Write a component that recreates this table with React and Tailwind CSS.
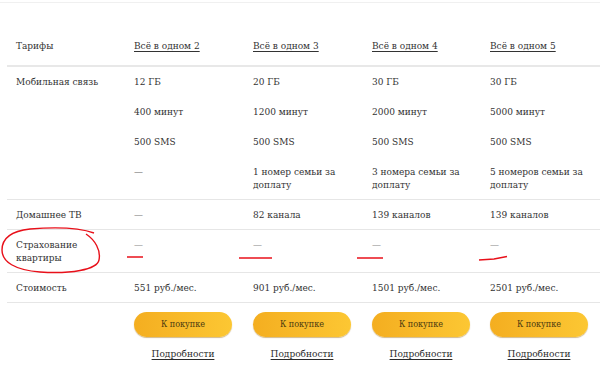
import React from 'react';

const tariffs = [
  {
    name: 'Всё в одном 2',
    mobile: ['12 ГБ', '400 минут', '500 SMS', '—'],
    tv: '—',
    price: '551 руб./мес.',
  },
  {
    name: 'Всё в одном 3',
    mobile: ['20 ГБ', '1200 минут', '500 SMS', '1 номер семьи за доплату'],
    tv: '82 канала',
    price: '901 руб./мес.',
  },
  {
    name: 'Всё в одном 4',
    mobile: ['30 ГБ', '2000 минут', '500 SMS', '3 номера семьи за доплату'],
    tv: '139 каналов',
    price: '1501 руб./мес.',
  },
  {
    name: 'Всё в одном 5',
    mobile: ['30 ГБ', '5000 минут', '500 SMS', '5 номеров семьи за доплату'],
    tv: '139 каналов',
    price: '2501 руб./мес.',
  },
];

const grid = 'grid grid-cols-[118px_119px_119px_118px_119px]';

function App() {
  return (
    <div
      className="relative w-[600px] h-[371px] overflow-hidden bg-white text-[10px] leading-[13px] text-[#333] font-stretch-condensed"
      style={{ fontFamily: '"DejaVu Serif", "Liberation Serif", serif' }}
    >
      <div className="mt-[2px] h-px bg-[#f0f0f0]" />

      <div className="ml-[7px]">
        {/* header */}
        <div className={`${grid} h-[62px] items-end pb-[13px]`}>
          <div className="pl-[9px]">Тарифы</div>
          {tariffs.map((t) => (
            <div key={t.name} className="pl-[9px]">
              <span className="underline underline-offset-2">{t.name}</span>
            </div>
          ))}
        </div>
        <div className="h-[2px] bg-[#e8e8e8]" />

        {/* mobile */}
        <div className={`${grid} pt-[8px] pb-[8px] border-b border-[#e6e6e6]`}>
          <div className="pl-[9px]">Мобильная связь</div>
          {tariffs.map((t) => (
            <div key={t.name} className="pl-[9px] pr-[8px] flex flex-col gap-[17px]">
              {t.mobile.map((m, i) => (
                <div key={i} className={m === '—' ? 'text-[#666]' : ''}>{m}</div>
              ))}
            </div>
          ))}
        </div>

        {/* tv */}
        <div className={`${grid} py-[8px] border-b border-[#e6e6e6]`}>
          <div className="pl-[9px]">Домашнее ТВ</div>
          {tariffs.map((t) => (
            <div key={t.name} className={`pl-[9px] ${t.tv === '—' ? 'text-[#777]' : ''}`}>{t.tv}</div>
          ))}
        </div>

        {/* insurance */}
        <div className={`${grid} py-[8px] border-b border-[#e6e6e6]`}>
          <div className="pl-[9px]">Страхование<br />квартиры</div>
          {tariffs.map((t) => (
            <div key={t.name} className="pl-[9px] text-[#888]">—</div>
          ))}
        </div>

        {/* price */}
        <div className={`${grid} py-[8px] border-b border-[#e6e6e6]`}>
          <div className="pl-[9px]">Стоимость</div>
          {tariffs.map((t) => (
            <div key={t.name} className="pl-[9px]">{t.price}</div>
          ))}
        </div>

        {/* buttons */}
        <div className={`${grid} pt-[9px]`}>
          <div />
          {tariffs.map((t) => (
            <div key={t.name} className="pl-[9px]">
              <div className="w-[98px] flex flex-col items-center">
                <button className="w-[98px] h-[25px] rounded-full bg-gradient-to-r from-[#f4ae20] to-[#fcc733] shadow-[0_1px_1px_rgba(150,100,0,0.45)] text-[9px] text-[#4a3a10]">
                  К покупке
                </button>
                <a className="mt-[10px] underline underline-offset-2 text-[#2b2b2b]">Подробности</a>
              </div>
            </div>
          ))}
        </div>
      </div>

      {/* red annotation marks */}
      <svg className="absolute left-0 top-0 pointer-events-none" width="600" height="371">
        <path
          d="M86 234 C 95 240, 101 250, 99 260 C 97 270, 70 274, 40 272 C 15 270, 2 262, 2 250 C 2 238, 12 231, 30 229 C 55 227, 80 228, 94 233"
          fill="none"
          stroke="#e8101a"
          strokeWidth="1.4"
        />
        <line x1="127" y1="257" x2="143" y2="257" stroke="#e8101a" strokeWidth="1.5" />
        <line x1="239" y1="258" x2="272" y2="258" stroke="#e8101a" strokeWidth="1.5" />
        <line x1="357" y1="258" x2="383" y2="258" stroke="#e8101a" strokeWidth="1.5" />
        <path d="M479 260 L494 259 L507 256.5" fill="none" stroke="#e8101a" strokeWidth="1.5" />
      </svg>
    </div>
  );
}

export default App;
